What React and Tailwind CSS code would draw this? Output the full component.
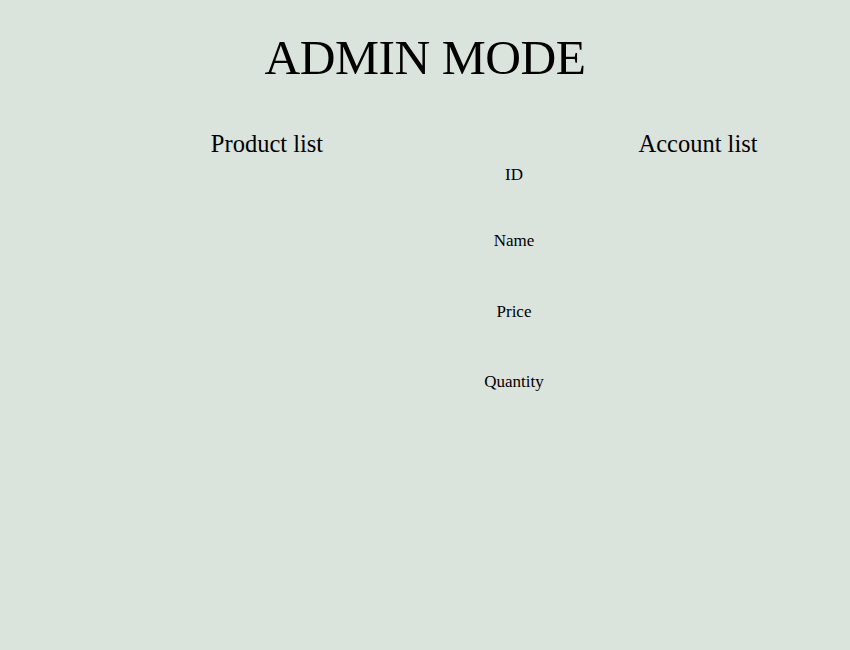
import React from 'react';

const FIELDS = ['ID', 'Name', 'Price', 'Quantity'];

const App = () => {
  return (
    <div className="min-h-[650px] w-full bg-[#dbe3dd] text-black font-['Liberation_Serif',serif]">
      <h1 className="pt-[27px] text-center text-[49.5px] leading-[62px] tracking-[-0.5px]">ADMIN MODE</h1>

      <div className="mt-[40px] flex pl-[84px]">
        <div className="w-[366px] text-center">
          <h2 className="text-[24.5px] leading-[30px]">Product list</h2>
        </div>

        <div className="w-[128px] pt-[36px] flex flex-col items-center text-[17px] leading-[20px]">
          <div className="h-[20px]">{FIELDS[0]}</div>
          <div className="mt-[46px] h-[20px]">{FIELDS[1]}</div>
          <div className="mt-[51px] h-[20px]">{FIELDS[2]}</div>
          <div className="mt-[50px] h-[20px]">{FIELDS[3]}</div>
        </div>

        <div className="w-[240px] text-center">
          <h2 className="text-[24.5px] leading-[30px]">Account list</h2>
        </div>
      </div>
    </div>
  );
};

export default App;
